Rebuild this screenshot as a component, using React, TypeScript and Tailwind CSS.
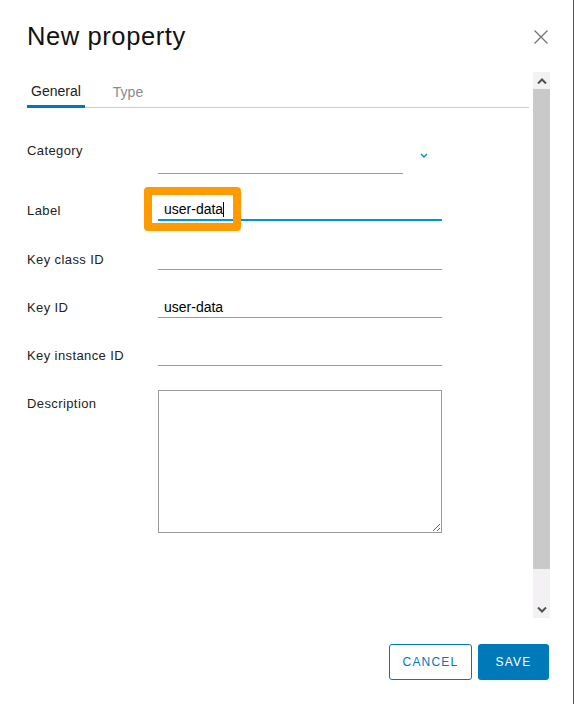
import React from 'react'

const font = { fontFamily: '"Liberation Sans", Arial, sans-serif' }

function Field({ label, children }: { label: string; children: React.ReactNode }) {
  return (
    <div className="flex">
      <div className="w-[131px] h-[24px] pt-[4px] flex items-center text-[13px] tracking-[0.4px] text-[#222]">{label}</div>
      {children}
    </div>
  )
}

function Underlined({ value }: { value?: string }) {
  return (
    <div className="w-[284px] h-[24px] pt-[4px] pl-[6px] flex items-center border-b border-[#9a9a9a] text-[14px] text-black">
      {value}
    </div>
  )
}

function FakeScrollbar() {
  return (
    <div className="w-[17px] flex flex-col bg-[#f4f1f4]">
      <div className="h-[17px] flex items-center justify-center">
        <svg width="10" height="6" viewBox="0 0 10 6">
          <path d="M1 5.5 L5 1.5 L9 5.5" fill="none" stroke="#505050" strokeWidth="2" />
        </svg>
      </div>
      <div className="h-[480px] bg-[#c9c9c9]" />
      <div className="flex-1" />
      <div className="h-[17px] flex items-center justify-center">
        <svg width="10" height="6" viewBox="0 0 10 6">
          <path d="M1 0.5 L5 4.5 L9 0.5" fill="none" stroke="#505050" strokeWidth="2" />
        </svg>
      </div>
    </div>
  )
}

export default function App() {
  return (
    <div className="w-[575px] h-[704px] bg-white" style={font}>
      <div className="w-[574px] h-[704px] border-r border-[#555] flex flex-col">

        {/* Header */}
        <div className="h-[72px] shrink-0 flex justify-between pl-[27px] pr-[24px]">
          <div className="pt-[21px] text-[25.5px] leading-[30px] tracking-[0.6px] text-[#111]">New property</div>
          <button className="mt-[29px] w-[16px] h-[16px]">
            <svg width="16" height="16" viewBox="0 0 16 16">
              <path d="M1.5 1.5 L14.5 14.5 M14.5 1.5 L1.5 14.5" stroke="#747474" strokeWidth="1.3" fill="none" />
            </svg>
          </button>
        </div>

        {/* Scrollable body */}
        <div className="h-[546px] shrink-0 flex pl-[27px] pr-[23px]">
          <div className="w-[502px]">
            {/* Tabs */}
            <div className="h-[36px] flex border-b border-[#cccccc]">
              <div className="px-[4px] pt-[5px] flex items-center border-b-[3px] border-[#0079b8] -mb-px text-[14px] text-[#222]">General</div>
              <div className="ml-[24px] px-[4px] pt-[5px] flex items-center text-[14px] text-[#8a8a8a]">Type</div>
            </div>

            {/* Form */}
            <div className="mt-[28px] flex flex-col">
              <div className="flex">
                <div className="w-[131px] h-[24px] pt-[6px] flex items-center text-[13px] tracking-[0.4px] text-[#222]">Category</div>
                <div className="w-[245px] h-[38px] border-b border-[#9a9a9a]" />
                <div className="ml-[17px] mt-[17px]">
                  <svg width="8" height="5" viewBox="0 0 8 5">
                    <path d="M1 1 L4 4 L7 1" fill="none" stroke="#1a8ad4" strokeWidth="1.5" />
                  </svg>
                </div>
              </div>

              <div className="mt-[23px]">
                <div className="flex">
                  <div className="w-[131px] h-[24px] pt-[4px] flex items-center text-[13px] tracking-[0.4px] text-[#222]">Label</div>
                  <div className="relative w-[284px] h-[24px] pt-[3px] pl-[6px] flex items-center border-b-2 border-[#0095d3] text-[14px] text-black">
                    user-data<span className="w-px h-[15px] bg-black" />
                    <div className="absolute left-[-14px] top-[-10px] w-[97px] h-[44px] border-[8px] border-[#ff9b00] rounded-[4px]" />
                  </div>
                </div>
              </div>

              <div className="mt-[25px]">
                <Field label="Key class ID"><Underlined /></Field>
              </div>
              <div className="mt-[24px]">
                <Field label="Key ID"><Underlined value="user-data" /></Field>
              </div>
              <div className="mt-[24px]">
                <Field label="Key instance ID"><Underlined /></Field>
              </div>
              <div className="mt-[24px] flex">
                <div className="w-[131px] h-[24px] pt-[4px] flex items-center text-[13px] tracking-[0.4px] text-[#222]">Description</div>
                <textarea className="w-[284px] h-[143px] border border-[#9a9a9a] outline-none" />
              </div>
            </div>
          </div>
          <div className="w-[4px]" />
          <FakeScrollbar />
        </div>

        {/* Footer */}
        <div className="flex-1 flex justify-end items-start gap-[6px] pt-[26px] pr-[24px]">
          <button className="w-[83px] h-[36px] rounded-[3px] border border-[#0079b8] text-[#0079b8] text-[12px] tracking-[1.2px]">CANCEL</button>
          <button className="w-[71px] h-[36px] rounded-[3px] bg-[#0079b8] text-white text-[12px] tracking-[1.2px]">SAVE</button>
        </div>
      </div>
    </div>
  )
}
